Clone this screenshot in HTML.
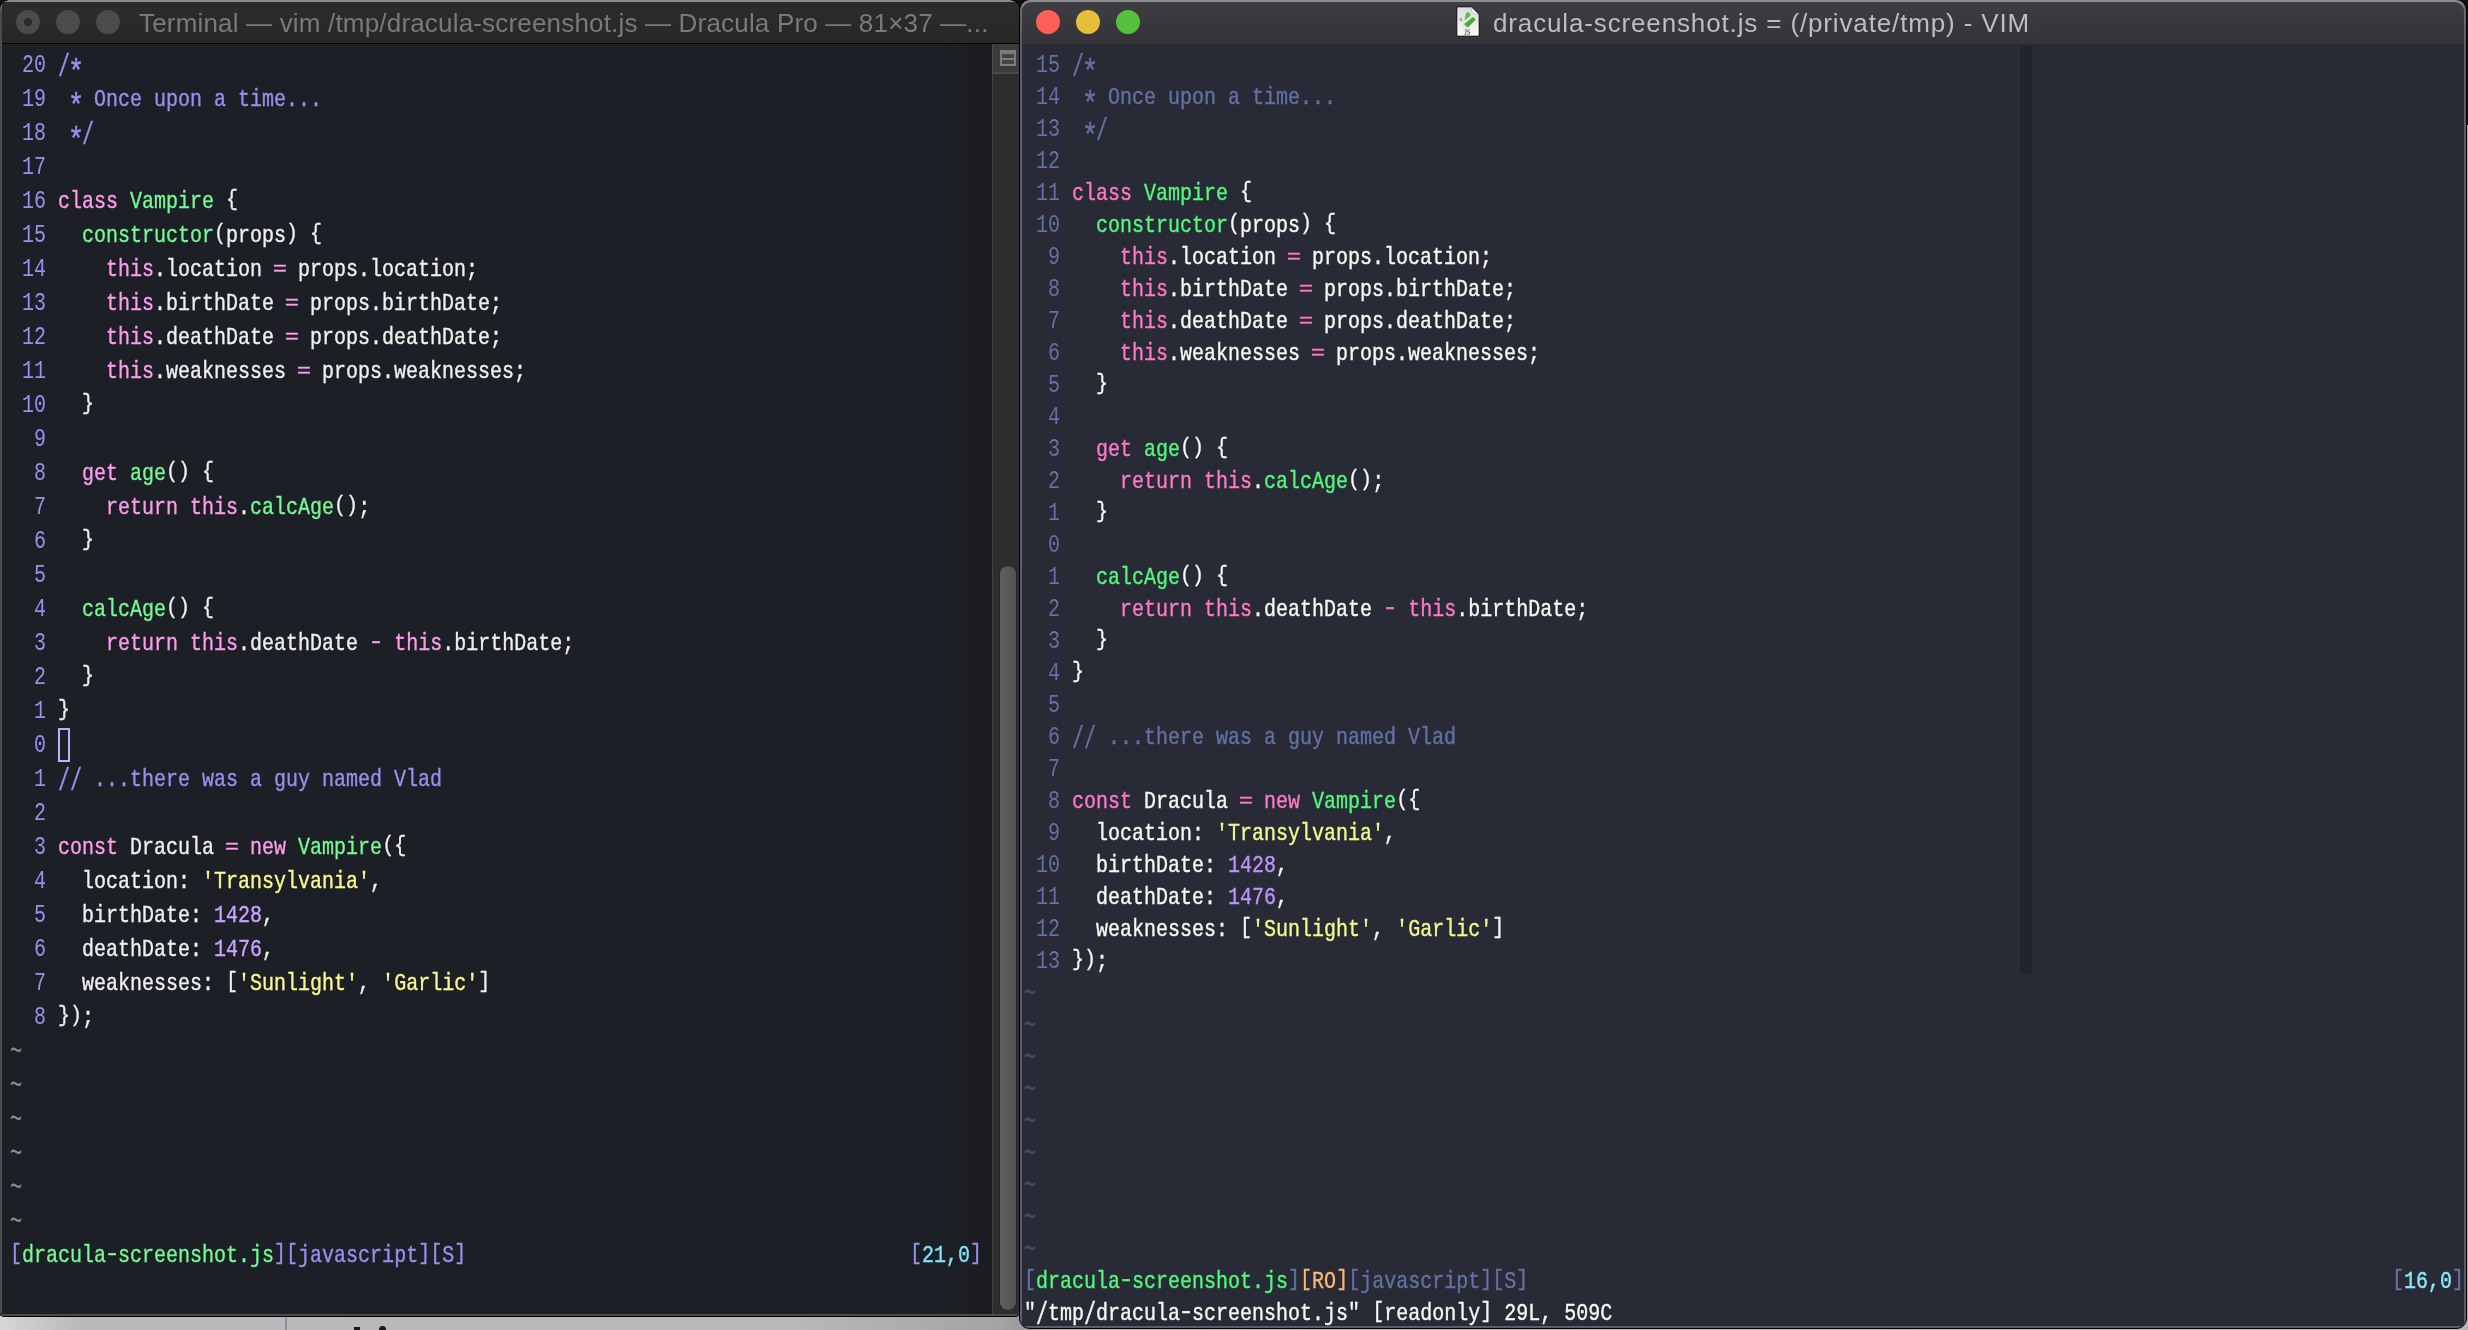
<!DOCTYPE html>
<html><head><meta charset="utf-8"><style>
html,body{margin:0;padding:0;width:2468px;height:1330px;overflow:hidden;position:relative}
body{background:linear-gradient(#111 0,#111 125px,#b4b4b4 125px)}
.t{position:absolute;white-space:pre;font-family:"Liberation Mono",monospace;font-size:20px;line-height:34px;height:34px;transform-origin:0 22px;will-change:transform;-webkit-text-stroke:0.3px currentColor}
.n{-webkit-text-stroke:0px currentColor}
.br{display:inline-block;transform:translateY(-1.8px) scaleY(0.9)}
.eq{display:inline-block;transform:translateY(-0.3px) scale(1.2,0.78)}
.hy{display:inline-block;transform:translateY(-1.7px) scaleX(1.35)}
.qt{display:inline-block;transform:translateY(0.9px)}
.ast{display:inline-block;transform:translateY(6.6px) scale(1.35)}
.sl{display:inline-block;transform:translateY(2px) scaleY(1.28)}
.tl{display:inline-block;transform:translateY(1px) scale(1.05,1.45)}
.abs{position:absolute}
</style></head><body>
<!-- desktop strip at bottom -->
<div class="abs" style="left:0;top:1300px;width:2468px;height:30px;background:linear-gradient(90deg,#d6d6d6 0,#bababa 80px,#b8b8b8 800px,#a4a4a4 1000px,#9c9c9c 1019px,#b0b0b0 1100px,#b4b4b4 2468px)"></div>
<div class="abs" style="left:285px;top:1316px;width:2px;height:14px;background:#8e939b"></div>
<div class="abs" style="left:354px;top:1327px;width:6px;height:3px;background:#1a1a1a"></div>
<div class="abs" style="left:379px;top:1326px;width:7px;height:4px;border-radius:4px 4px 0 0;background:#1a1a1a"></div>

<!-- LEFT WINDOW -->
<div class="abs" style="left:-1px;top:-1px;width:1021px;height:1318px;border-radius:10px 10px 5px 5px;background:#000"></div>
<div class="abs" style="left:0;top:0;width:1019px;height:1316px;border-radius:9px 9px 4px 4px;background:#000;overflow:hidden">
  <div class="abs" style="left:0;top:0;width:1019px;height:1316px;border-radius:9px 9px 4px 4px;background:linear-gradient(#8a8a8a,#8a8a8a 2px,#4a4b50 12px);overflow:hidden">
    <div class="abs" style="left:2px;top:2px;width:1017px;height:41px;background:linear-gradient(#2b2c2b,#262726)"></div>
    <div class="abs" style="left:2px;top:43px;width:1017px;height:1px;background:#000"></div>
    <div class="abs" style="left:2px;top:44px;width:990px;height:1270px;background:linear-gradient(90deg,#1d1f27 0%,#1d1f27 95%,#1b1c20 100%)"></div>
    <div class="abs" style="left:2px;top:1314px;width:1017px;height:2px;background:#4a4b50"></div>
    <!-- scrollbar -->
    <div class="abs" style="left:992px;top:44px;width:27px;height:1270px;background:#2c2d2c;border-left:1px solid #404140;box-sizing:border-box"></div>
    <div class="abs" style="left:992px;top:44px;width:27px;height:30px;background:#3a3b3a;border-left:1px solid #4a4b4a;border-bottom:2px solid #4a4b4a;box-sizing:border-box"></div>
    <div class="abs" style="left:1000px;top:50px;width:16px;height:16px;background:#7c7c7c"></div>
    <div class="abs" style="left:1002px;top:54px;width:12px;height:4px;background:#454545"></div>
    <div class="abs" style="left:1002px;top:60px;width:12px;height:4px;background:#454545"></div>
    <div class="abs" style="left:1000px;top:566px;width:16px;height:744px;border-radius:8px;background:linear-gradient(90deg,#5f5f5f,#525252);box-shadow:0 0 0 1px #242524"></div>
  </div>
</div>
<!-- left traffic lights -->
<div class="abs" style="left:16px;top:10px;width:24px;height:24px;border-radius:50%;background:#4b4b4b"></div>
<div class="abs" style="left:24px;top:18px;width:8px;height:8px;border-radius:50%;background:#2a2a2a"></div>
<div class="abs" style="left:56px;top:10px;width:24px;height:24px;border-radius:50%;background:#4b4b4b"></div>
<div class="abs" style="left:96px;top:10px;width:24px;height:24px;border-radius:50%;background:#4b4b4b"></div>
<div class="abs" style="left:139px;top:1px;height:44px;line-height:44px;font-family:'Liberation Sans',sans-serif;font-size:26px;letter-spacing:0.18px;color:#7a7a7a;white-space:pre;will-change:transform">Terminal — vim /tmp/dracula-screenshot.js — Dracula Pro — 81×37 —...</div>
<div class="t n" style="left:10px;top:50px;transform:scaleY(1.28)"><span style="color:#9890ee"> 20 </span></div>
<div class="t" style="left:58px;top:50px;transform:scaleY(1.22)"><span style="color:#9890ee"><span class="sl">/</span><span class="ast">*</span></span></div>
<div class="t n" style="left:10px;top:84px;transform:scaleY(1.28)"><span style="color:#9890ee"> 19 </span></div>
<div class="t" style="left:58px;top:84px;transform:scaleY(1.22)"><span style="color:#9890ee"> <span class="ast">*</span> Once upon a time...</span></div>
<div class="t n" style="left:10px;top:118px;transform:scaleY(1.28)"><span style="color:#9890ee"> 18 </span></div>
<div class="t" style="left:58px;top:118px;transform:scaleY(1.22)"><span style="color:#9890ee"> <span class="ast">*</span><span class="sl">/</span></span></div>
<div class="t n" style="left:10px;top:152px;transform:scaleY(1.28)"><span style="color:#9890ee"> 17 </span></div>
<div class="t n" style="left:10px;top:186px;transform:scaleY(1.28)"><span style="color:#9890ee"> 16 </span></div>
<div class="t" style="left:58px;top:186px;transform:scaleY(1.22)"><span style="color:#ff9cec">class</span><span style="color:#f0f0ec"> </span><span style="color:#74fa92">Vampire</span><span style="color:#f0f0ec"> <span class="br">{</span></span></div>
<div class="t n" style="left:10px;top:220px;transform:scaleY(1.28)"><span style="color:#9890ee"> 15 </span></div>
<div class="t" style="left:58px;top:220px;transform:scaleY(1.22)"><span style="color:#f0f0ec">  </span><span style="color:#74fa92">constructor</span><span style="color:#f0f0ec"><span class="br">(</span>props<span class="br">)</span> <span class="br">{</span></span></div>
<div class="t n" style="left:10px;top:254px;transform:scaleY(1.28)"><span style="color:#9890ee"> 14 </span></div>
<div class="t" style="left:58px;top:254px;transform:scaleY(1.22)"><span style="color:#f0f0ec">    </span><span style="color:#ff9cec">this</span><span style="color:#f0f0ec">.location </span><span style="color:#ff9cec"><span class="eq">=</span></span><span style="color:#f0f0ec"> props.location;</span></div>
<div class="t n" style="left:10px;top:288px;transform:scaleY(1.28)"><span style="color:#9890ee"> 13 </span></div>
<div class="t" style="left:58px;top:288px;transform:scaleY(1.22)"><span style="color:#f0f0ec">    </span><span style="color:#ff9cec">this</span><span style="color:#f0f0ec">.birthDate </span><span style="color:#ff9cec"><span class="eq">=</span></span><span style="color:#f0f0ec"> props.birthDate;</span></div>
<div class="t n" style="left:10px;top:322px;transform:scaleY(1.28)"><span style="color:#9890ee"> 12 </span></div>
<div class="t" style="left:58px;top:322px;transform:scaleY(1.22)"><span style="color:#f0f0ec">    </span><span style="color:#ff9cec">this</span><span style="color:#f0f0ec">.deathDate </span><span style="color:#ff9cec"><span class="eq">=</span></span><span style="color:#f0f0ec"> props.deathDate;</span></div>
<div class="t n" style="left:10px;top:356px;transform:scaleY(1.28)"><span style="color:#9890ee"> 11 </span></div>
<div class="t" style="left:58px;top:356px;transform:scaleY(1.22)"><span style="color:#f0f0ec">    </span><span style="color:#ff9cec">this</span><span style="color:#f0f0ec">.weaknesses </span><span style="color:#ff9cec"><span class="eq">=</span></span><span style="color:#f0f0ec"> props.weaknesses;</span></div>
<div class="t n" style="left:10px;top:390px;transform:scaleY(1.28)"><span style="color:#9890ee"> 10 </span></div>
<div class="t" style="left:58px;top:390px;transform:scaleY(1.22)"><span style="color:#f0f0ec">  <span class="br">}</span></span></div>
<div class="t n" style="left:10px;top:424px;transform:scaleY(1.28)"><span style="color:#9890ee">  9 </span></div>
<div class="t n" style="left:10px;top:458px;transform:scaleY(1.28)"><span style="color:#9890ee">  8 </span></div>
<div class="t" style="left:58px;top:458px;transform:scaleY(1.22)"><span style="color:#f0f0ec">  </span><span style="color:#ff9cec">get</span><span style="color:#f0f0ec"> </span><span style="color:#74fa92">age</span><span style="color:#f0f0ec"><span class="br">(</span><span class="br">)</span> <span class="br">{</span></span></div>
<div class="t n" style="left:10px;top:492px;transform:scaleY(1.28)"><span style="color:#9890ee">  7 </span></div>
<div class="t" style="left:58px;top:492px;transform:scaleY(1.22)"><span style="color:#f0f0ec">    </span><span style="color:#ff9cec">return</span><span style="color:#f0f0ec"> </span><span style="color:#ff9cec">this</span><span style="color:#f0f0ec">.</span><span style="color:#74fa92">calcAge</span><span style="color:#f0f0ec"><span class="br">(</span><span class="br">)</span>;</span></div>
<div class="t n" style="left:10px;top:526px;transform:scaleY(1.28)"><span style="color:#9890ee">  6 </span></div>
<div class="t" style="left:58px;top:526px;transform:scaleY(1.22)"><span style="color:#f0f0ec">  <span class="br">}</span></span></div>
<div class="t n" style="left:10px;top:560px;transform:scaleY(1.28)"><span style="color:#9890ee">  5 </span></div>
<div class="t n" style="left:10px;top:594px;transform:scaleY(1.28)"><span style="color:#9890ee">  4 </span></div>
<div class="t" style="left:58px;top:594px;transform:scaleY(1.22)"><span style="color:#f0f0ec">  </span><span style="color:#74fa92">calcAge</span><span style="color:#f0f0ec"><span class="br">(</span><span class="br">)</span> <span class="br">{</span></span></div>
<div class="t n" style="left:10px;top:628px;transform:scaleY(1.28)"><span style="color:#9890ee">  3 </span></div>
<div class="t" style="left:58px;top:628px;transform:scaleY(1.22)"><span style="color:#f0f0ec">    </span><span style="color:#ff9cec">return</span><span style="color:#f0f0ec"> </span><span style="color:#ff9cec">this</span><span style="color:#f0f0ec">.deathDate </span><span style="color:#ff9cec"><span class="hy">-</span></span><span style="color:#f0f0ec"> </span><span style="color:#ff9cec">this</span><span style="color:#f0f0ec">.birthDate;</span></div>
<div class="t n" style="left:10px;top:662px;transform:scaleY(1.28)"><span style="color:#9890ee">  2 </span></div>
<div class="t" style="left:58px;top:662px;transform:scaleY(1.22)"><span style="color:#f0f0ec">  <span class="br">}</span></span></div>
<div class="t n" style="left:10px;top:696px;transform:scaleY(1.28)"><span style="color:#9890ee">  1 </span></div>
<div class="t" style="left:58px;top:696px;transform:scaleY(1.22)"><span style="color:#f0f0ec"><span class="br">}</span></span></div>
<div class="t n" style="left:10px;top:730px;transform:scaleY(1.28)"><span style="color:#9890ee">  0 </span></div>
<div class="t n" style="left:10px;top:764px;transform:scaleY(1.28)"><span style="color:#9890ee">  1 </span></div>
<div class="t" style="left:58px;top:764px;transform:scaleY(1.22)"><span style="color:#9890ee"><span class="sl">/</span><span class="sl">/</span> ...there was a guy named Vlad</span></div>
<div class="t n" style="left:10px;top:798px;transform:scaleY(1.28)"><span style="color:#9890ee">  2 </span></div>
<div class="t n" style="left:10px;top:832px;transform:scaleY(1.28)"><span style="color:#9890ee">  3 </span></div>
<div class="t" style="left:58px;top:832px;transform:scaleY(1.22)"><span style="color:#ff9cec">const</span><span style="color:#f0f0ec"> Dracula </span><span style="color:#ff9cec"><span class="eq">=</span></span><span style="color:#f0f0ec"> </span><span style="color:#ff9cec">new</span><span style="color:#f0f0ec"> </span><span style="color:#74fa92">Vampire</span><span style="color:#f0f0ec"><span class="br">(</span><span class="br">{</span></span></div>
<div class="t n" style="left:10px;top:866px;transform:scaleY(1.28)"><span style="color:#9890ee">  4 </span></div>
<div class="t" style="left:58px;top:866px;transform:scaleY(1.22)"><span style="color:#f0f0ec">  location: </span><span style="color:#f9f98e"><span class="qt">&#39;</span>Transylvania<span class="qt">&#39;</span></span><span style="color:#f0f0ec">,</span></div>
<div class="t n" style="left:10px;top:900px;transform:scaleY(1.28)"><span style="color:#9890ee">  5 </span></div>
<div class="t" style="left:58px;top:900px;transform:scaleY(1.22)"><span style="color:#f0f0ec">  birthDate: </span><span style="color:#c9a5ff">1428</span><span style="color:#f0f0ec">,</span></div>
<div class="t n" style="left:10px;top:934px;transform:scaleY(1.28)"><span style="color:#9890ee">  6 </span></div>
<div class="t" style="left:58px;top:934px;transform:scaleY(1.22)"><span style="color:#f0f0ec">  deathDate: </span><span style="color:#c9a5ff">1476</span><span style="color:#f0f0ec">,</span></div>
<div class="t n" style="left:10px;top:968px;transform:scaleY(1.28)"><span style="color:#9890ee">  7 </span></div>
<div class="t" style="left:58px;top:968px;transform:scaleY(1.22)"><span style="color:#f0f0ec">  weaknesses: <span class="br">[</span></span><span style="color:#f9f98e"><span class="qt">&#39;</span>Sunlight<span class="qt">&#39;</span></span><span style="color:#f0f0ec">, </span><span style="color:#f9f98e"><span class="qt">&#39;</span>Garlic<span class="qt">&#39;</span></span><span style="color:#f0f0ec"><span class="br">]</span></span></div>
<div class="t n" style="left:10px;top:1002px;transform:scaleY(1.28)"><span style="color:#9890ee">  8 </span></div>
<div class="t" style="left:58px;top:1002px;transform:scaleY(1.22)"><span style="color:#f0f0ec"><span class="br">}</span><span class="br">)</span>;</span></div>
<div class="t n" style="left:10px;top:1036px;transform:scaleY(1.22)"><span class="tl" style="color:#8a8a8a">~</span></div>
<div class="t n" style="left:10px;top:1070px;transform:scaleY(1.22)"><span class="tl" style="color:#8a8a8a">~</span></div>
<div class="t n" style="left:10px;top:1104px;transform:scaleY(1.22)"><span class="tl" style="color:#8a8a8a">~</span></div>
<div class="t n" style="left:10px;top:1138px;transform:scaleY(1.22)"><span class="tl" style="color:#8a8a8a">~</span></div>
<div class="t n" style="left:10px;top:1172px;transform:scaleY(1.22)"><span class="tl" style="color:#8a8a8a">~</span></div>
<div class="t n" style="left:10px;top:1206px;transform:scaleY(1.22)"><span class="tl" style="color:#8a8a8a">~</span></div>
<div class="t" style="left:10px;top:1240px;transform:scaleY(1.22)"><span style="color:#9890ee"><span class="br">[</span></span><span style="color:#74fa92">dracula<span class="hy">-</span>screenshot.js</span><span style="color:#9890ee"><span class="br">]</span><span class="br">[</span>javascript<span class="br">]</span><span class="br">[</span>S<span class="br">]</span></span></div>
<div class="t" style="left:910px;top:1240px;transform:scaleY(1.22)"><span style="color:#9890ee"><span class="br">[</span></span><span style="color:#82e2f8">21,0</span><span style="color:#9890ee"><span class="br">]</span></span></div>
<div style="position:absolute;left:58px;top:728px;width:8px;height:30px;border:2px solid #bdb1ff"></div>

<!-- RIGHT WINDOW -->
<div class="abs" style="left:1019px;top:-1px;width:1448px;height:1330px;border-radius:11px;background:#000"></div>
<div class="abs" style="left:1020px;top:0;width:1446px;height:1328px;border-radius:10px 10px 9px 9px;background:linear-gradient(#8c8c8e,#8c8c8e 2px,#67686e 10px,#5b5d6b 44px);overflow:hidden">
  <div class="abs" style="left:2px;top:2px;width:1442px;height:42px;border-radius:9px 9px 0 0;background:linear-gradient(#3d3d42,#333338)"></div>
  <div class="abs" style="left:2px;top:44px;width:1442px;height:1282px;background:#282a36"></div>
</div>
<div class="abs" style="left:1020px;top:44px;width:2px;height:1276px;background:#5b5d6b"></div>
<div class="abs" style="left:2464px;top:44px;width:2px;height:1276px;background:#5b5d6b"></div>
<div class="abs" style="left:2020px;top:46px;width:12px;height:928px;background:#22232c"></div>
<div class="abs" style="left:1036px;top:10px;width:24px;height:24px;border-radius:50%;background:#fe5f57"></div>
<div class="abs" style="left:1076px;top:10px;width:24px;height:24px;border-radius:50%;background:#e5bf3c"></div>
<div class="abs" style="left:1116px;top:10px;width:24px;height:24px;border-radius:50%;background:#57c03a"></div>
<!-- js icon -->
<svg class="abs" style="left:1456px;top:6px;will-change:transform" width="24" height="31" viewBox="0 0 24 31">
  <defs><linearGradient id="pg" x1="0" y1="0" x2="0" y2="1"><stop offset="0" stop-color="#dcdcdc"/><stop offset="1" stop-color="#fafafa"/></linearGradient></defs>
  <path d="M0.8 0.8 H15.3 L23.2 8.7 V30.2 H0.8 Z" fill="url(#pg)" stroke="#0e0e10" stroke-width="1"/>
  <path d="M15.2 1.2 C15.5 5 15.6 8.3 22.8 8.8 Z" fill="#ffffff" stroke="#9a9a9a" stroke-width="0.6"/>
  <path d="M4.6 8 L8.2 22 L16 11" fill="none" stroke="#e6e6e6" stroke-width="2"/>
  <path d="M3.2 13.6 L5.6 11.2 L5.8 15.8 Z" fill="#5cb84a"/>
  <path d="M8.6 14.4 C8.8 10 10 6.5 11.4 5.9 C12.8 5.8 14.2 7.6 14.8 9.6 Z" fill="#62bd4f"/>
  <path d="M8.1 18 L16.9 11 L20 13.5 L11.6 21.8 Z" fill="#46ab38"/>
  <text x="8.2" y="28.8" font-family="Liberation Serif" font-size="7.5" fill="#3a3a3a" textLength="6.5" lengthAdjust="spacingAndGlyphs">JS</text>
</svg>
<div class="abs" style="left:1493px;top:1px;height:44px;line-height:44px;font-family:'Liberation Sans',sans-serif;font-size:26px;letter-spacing:0.86px;color:#bdbdc1;white-space:pre;will-change:transform">dracula-screenshot.js = (/private/tmp) - VIM</div>
<div class="t n" style="left:1024px;top:50px;transform:scaleY(1.28)"><span style="color:#6272a4"> 15 </span></div>
<div class="t" style="left:1072px;top:50px;transform:scaleY(1.22)"><span style="color:#6272a4"><span class="sl">/</span><span class="ast">*</span></span></div>
<div class="t n" style="left:1024px;top:82px;transform:scaleY(1.28)"><span style="color:#6272a4"> 14 </span></div>
<div class="t" style="left:1072px;top:82px;transform:scaleY(1.22)"><span style="color:#6272a4"> <span class="ast">*</span> Once upon a time...</span></div>
<div class="t n" style="left:1024px;top:114px;transform:scaleY(1.28)"><span style="color:#6272a4"> 13 </span></div>
<div class="t" style="left:1072px;top:114px;transform:scaleY(1.22)"><span style="color:#6272a4"> <span class="ast">*</span><span class="sl">/</span></span></div>
<div class="t n" style="left:1024px;top:146px;transform:scaleY(1.28)"><span style="color:#6272a4"> 12 </span></div>
<div class="t n" style="left:1024px;top:178px;transform:scaleY(1.28)"><span style="color:#6272a4"> 11 </span></div>
<div class="t" style="left:1072px;top:178px;transform:scaleY(1.22)"><span style="color:#ff79c6">class</span><span style="color:#f8f8f2"> </span><span style="color:#50fa7b">Vampire</span><span style="color:#f8f8f2"> <span class="br">{</span></span></div>
<div class="t n" style="left:1024px;top:210px;transform:scaleY(1.28)"><span style="color:#6272a4"> 10 </span></div>
<div class="t" style="left:1072px;top:210px;transform:scaleY(1.22)"><span style="color:#f8f8f2">  </span><span style="color:#50fa7b">constructor</span><span style="color:#f8f8f2"><span class="br">(</span>props<span class="br">)</span> <span class="br">{</span></span></div>
<div class="t n" style="left:1024px;top:242px;transform:scaleY(1.28)"><span style="color:#6272a4">  9 </span></div>
<div class="t" style="left:1072px;top:242px;transform:scaleY(1.22)"><span style="color:#f8f8f2">    </span><span style="color:#ff79c6">this</span><span style="color:#f8f8f2">.location </span><span style="color:#ff79c6"><span class="eq">=</span></span><span style="color:#f8f8f2"> props.location;</span></div>
<div class="t n" style="left:1024px;top:274px;transform:scaleY(1.28)"><span style="color:#6272a4">  8 </span></div>
<div class="t" style="left:1072px;top:274px;transform:scaleY(1.22)"><span style="color:#f8f8f2">    </span><span style="color:#ff79c6">this</span><span style="color:#f8f8f2">.birthDate </span><span style="color:#ff79c6"><span class="eq">=</span></span><span style="color:#f8f8f2"> props.birthDate;</span></div>
<div class="t n" style="left:1024px;top:306px;transform:scaleY(1.28)"><span style="color:#6272a4">  7 </span></div>
<div class="t" style="left:1072px;top:306px;transform:scaleY(1.22)"><span style="color:#f8f8f2">    </span><span style="color:#ff79c6">this</span><span style="color:#f8f8f2">.deathDate </span><span style="color:#ff79c6"><span class="eq">=</span></span><span style="color:#f8f8f2"> props.deathDate;</span></div>
<div class="t n" style="left:1024px;top:338px;transform:scaleY(1.28)"><span style="color:#6272a4">  6 </span></div>
<div class="t" style="left:1072px;top:338px;transform:scaleY(1.22)"><span style="color:#f8f8f2">    </span><span style="color:#ff79c6">this</span><span style="color:#f8f8f2">.weaknesses </span><span style="color:#ff79c6"><span class="eq">=</span></span><span style="color:#f8f8f2"> props.weaknesses;</span></div>
<div class="t n" style="left:1024px;top:370px;transform:scaleY(1.28)"><span style="color:#6272a4">  5 </span></div>
<div class="t" style="left:1072px;top:370px;transform:scaleY(1.22)"><span style="color:#f8f8f2">  <span class="br">}</span></span></div>
<div class="t n" style="left:1024px;top:402px;transform:scaleY(1.28)"><span style="color:#6272a4">  4 </span></div>
<div class="t n" style="left:1024px;top:434px;transform:scaleY(1.28)"><span style="color:#6272a4">  3 </span></div>
<div class="t" style="left:1072px;top:434px;transform:scaleY(1.22)"><span style="color:#f8f8f2">  </span><span style="color:#ff79c6">get</span><span style="color:#f8f8f2"> </span><span style="color:#50fa7b">age</span><span style="color:#f8f8f2"><span class="br">(</span><span class="br">)</span> <span class="br">{</span></span></div>
<div class="t n" style="left:1024px;top:466px;transform:scaleY(1.28)"><span style="color:#6272a4">  2 </span></div>
<div class="t" style="left:1072px;top:466px;transform:scaleY(1.22)"><span style="color:#f8f8f2">    </span><span style="color:#ff79c6">return</span><span style="color:#f8f8f2"> </span><span style="color:#ff79c6">this</span><span style="color:#f8f8f2">.</span><span style="color:#50fa7b">calcAge</span><span style="color:#f8f8f2"><span class="br">(</span><span class="br">)</span>;</span></div>
<div class="t n" style="left:1024px;top:498px;transform:scaleY(1.28)"><span style="color:#6272a4">  1 </span></div>
<div class="t" style="left:1072px;top:498px;transform:scaleY(1.22)"><span style="color:#f8f8f2">  <span class="br">}</span></span></div>
<div class="t n" style="left:1024px;top:530px;transform:scaleY(1.28)"><span style="color:#6272a4">  0 </span></div>
<div class="t n" style="left:1024px;top:562px;transform:scaleY(1.28)"><span style="color:#6272a4">  1 </span></div>
<div class="t" style="left:1072px;top:562px;transform:scaleY(1.22)"><span style="color:#f8f8f2">  </span><span style="color:#50fa7b">calcAge</span><span style="color:#f8f8f2"><span class="br">(</span><span class="br">)</span> <span class="br">{</span></span></div>
<div class="t n" style="left:1024px;top:594px;transform:scaleY(1.28)"><span style="color:#6272a4">  2 </span></div>
<div class="t" style="left:1072px;top:594px;transform:scaleY(1.22)"><span style="color:#f8f8f2">    </span><span style="color:#ff79c6">return</span><span style="color:#f8f8f2"> </span><span style="color:#ff79c6">this</span><span style="color:#f8f8f2">.deathDate </span><span style="color:#ff79c6"><span class="hy">-</span></span><span style="color:#f8f8f2"> </span><span style="color:#ff79c6">this</span><span style="color:#f8f8f2">.birthDate;</span></div>
<div class="t n" style="left:1024px;top:626px;transform:scaleY(1.28)"><span style="color:#6272a4">  3 </span></div>
<div class="t" style="left:1072px;top:626px;transform:scaleY(1.22)"><span style="color:#f8f8f2">  <span class="br">}</span></span></div>
<div class="t n" style="left:1024px;top:658px;transform:scaleY(1.28)"><span style="color:#6272a4">  4 </span></div>
<div class="t" style="left:1072px;top:658px;transform:scaleY(1.22)"><span style="color:#f8f8f2"><span class="br">}</span></span></div>
<div class="t n" style="left:1024px;top:690px;transform:scaleY(1.28)"><span style="color:#6272a4">  5 </span></div>
<div class="t n" style="left:1024px;top:722px;transform:scaleY(1.28)"><span style="color:#6272a4">  6 </span></div>
<div class="t" style="left:1072px;top:722px;transform:scaleY(1.22)"><span style="color:#6272a4"><span class="sl">/</span><span class="sl">/</span> ...there was a guy named Vlad</span></div>
<div class="t n" style="left:1024px;top:754px;transform:scaleY(1.28)"><span style="color:#6272a4">  7 </span></div>
<div class="t n" style="left:1024px;top:786px;transform:scaleY(1.28)"><span style="color:#6272a4">  8 </span></div>
<div class="t" style="left:1072px;top:786px;transform:scaleY(1.22)"><span style="color:#ff79c6">const</span><span style="color:#f8f8f2"> Dracula </span><span style="color:#ff79c6"><span class="eq">=</span></span><span style="color:#f8f8f2"> </span><span style="color:#ff79c6">new</span><span style="color:#f8f8f2"> </span><span style="color:#50fa7b">Vampire</span><span style="color:#f8f8f2"><span class="br">(</span><span class="br">{</span></span></div>
<div class="t n" style="left:1024px;top:818px;transform:scaleY(1.28)"><span style="color:#6272a4">  9 </span></div>
<div class="t" style="left:1072px;top:818px;transform:scaleY(1.22)"><span style="color:#f8f8f2">  location: </span><span style="color:#f1fa8c"><span class="qt">&#39;</span>Transylvania<span class="qt">&#39;</span></span><span style="color:#f8f8f2">,</span></div>
<div class="t n" style="left:1024px;top:850px;transform:scaleY(1.28)"><span style="color:#6272a4"> 10 </span></div>
<div class="t" style="left:1072px;top:850px;transform:scaleY(1.22)"><span style="color:#f8f8f2">  birthDate: </span><span style="color:#bd93f9">1428</span><span style="color:#f8f8f2">,</span></div>
<div class="t n" style="left:1024px;top:882px;transform:scaleY(1.28)"><span style="color:#6272a4"> 11 </span></div>
<div class="t" style="left:1072px;top:882px;transform:scaleY(1.22)"><span style="color:#f8f8f2">  deathDate: </span><span style="color:#bd93f9">1476</span><span style="color:#f8f8f2">,</span></div>
<div class="t n" style="left:1024px;top:914px;transform:scaleY(1.28)"><span style="color:#6272a4"> 12 </span></div>
<div class="t" style="left:1072px;top:914px;transform:scaleY(1.22)"><span style="color:#f8f8f2">  weaknesses: <span class="br">[</span></span><span style="color:#f1fa8c"><span class="qt">&#39;</span>Sunlight<span class="qt">&#39;</span></span><span style="color:#f8f8f2">, </span><span style="color:#f1fa8c"><span class="qt">&#39;</span>Garlic<span class="qt">&#39;</span></span><span style="color:#f8f8f2"><span class="br">]</span></span></div>
<div class="t n" style="left:1024px;top:946px;transform:scaleY(1.28)"><span style="color:#6272a4"> 13 </span></div>
<div class="t" style="left:1072px;top:946px;transform:scaleY(1.22)"><span style="color:#f8f8f2"><span class="br">}</span><span class="br">)</span>;</span></div>
<div class="t" style="left:1024px;top:978px;transform:scaleY(1.22)"><span class="tl" style="color:#474a5c">~</span></div>
<div class="t" style="left:1024px;top:1010px;transform:scaleY(1.22)"><span class="tl" style="color:#474a5c">~</span></div>
<div class="t" style="left:1024px;top:1042px;transform:scaleY(1.22)"><span class="tl" style="color:#474a5c">~</span></div>
<div class="t" style="left:1024px;top:1074px;transform:scaleY(1.22)"><span class="tl" style="color:#474a5c">~</span></div>
<div class="t" style="left:1024px;top:1106px;transform:scaleY(1.22)"><span class="tl" style="color:#474a5c">~</span></div>
<div class="t" style="left:1024px;top:1138px;transform:scaleY(1.22)"><span class="tl" style="color:#474a5c">~</span></div>
<div class="t" style="left:1024px;top:1170px;transform:scaleY(1.22)"><span class="tl" style="color:#474a5c">~</span></div>
<div class="t" style="left:1024px;top:1202px;transform:scaleY(1.22)"><span class="tl" style="color:#474a5c">~</span></div>
<div class="t" style="left:1024px;top:1234px;transform:scaleY(1.22)"><span class="tl" style="color:#474a5c">~</span></div>
<div class="t" style="left:1024px;top:1266px;transform:scaleY(1.22)"><span style="color:#6272a4"><span class="br">[</span></span><span style="color:#50fa7b">dracula<span class="hy">-</span>screenshot.js</span><span style="color:#6272a4"><span class="br">]</span></span><span style="color:#ffb86c"><span class="br">[</span>RO<span class="br">]</span></span><span style="color:#6272a4"><span class="br">[</span>javascript<span class="br">]</span><span class="br">[</span>S<span class="br">]</span></span></div>
<div class="t" style="left:2392px;top:1266px;transform:scaleY(1.22)"><span style="color:#6272a4"><span class="br">[</span></span><span style="color:#8be9fd">16,0</span><span style="color:#6272a4"><span class="br">]</span></span></div>
<div class="t" style="left:1024px;top:1298px;transform:scaleY(1.22)"><span style="color:#f8f8f2">&quot;<span class="sl">/</span>tmp<span class="sl">/</span>dracula<span class="hy">-</span>screenshot.js&quot; <span class="br">[</span>readonly<span class="br">]</span> 29L, 509C</span></div>
</body></html>
